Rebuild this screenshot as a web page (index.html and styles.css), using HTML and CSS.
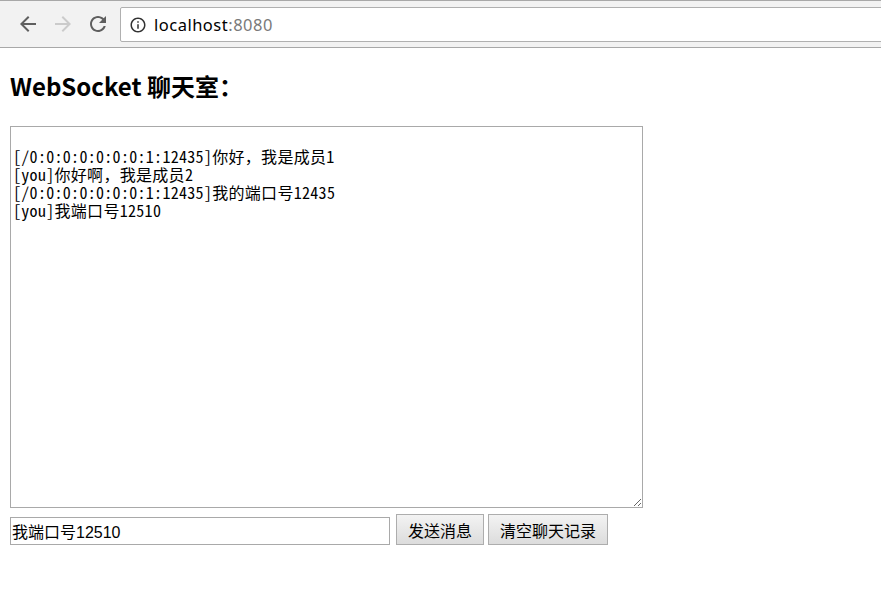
FILE: index.html
```html
<!DOCTYPE html>
<html lang="zh-CN">
<head>
<meta charset="utf-8">
<title>WebSocket 聊天室</title>
<link rel="stylesheet" href="styles.css">
</head>
<body>
<header class="chrome">
  <span class="nav-btn">
    <svg width="24" height="24" viewBox="0 0 24 24"><path fill="#5f5f5f" d="M20 11H7.83l5.59-5.59L12 4l-8 8 8 8 1.41-1.41L7.83 13H20v-2z"/></svg>
  </span>
  <span class="nav-btn">
    <svg width="24" height="24" viewBox="0 0 24 24"><path fill="#cbcbcb" d="M4 11h12.17l-5.59-5.59L12 4l8 8-8 8-1.41-1.41L16.17 13H4v-2z"/></svg>
  </span>
  <span class="nav-btn">
    <svg width="24" height="24" viewBox="0 0 24 24"><path fill="#5f5f5f" d="M17.65 6.35C16.2 4.9 14.21 4 12 4c-4.42 0-7.990 3.58-7.99 8s3.57 8 7.99 8c3.73 0 6.84-2.55 7.73-6h-2.08c-.82 2.33-3.04 4-5.65 4-3.31 0-6-2.690-6-6s2.69-6 6-6c1.66 0 3.14.69 4.22 1.78L13 11h7V4l-2.35 2.35z"/></svg>
  </span>
  <div class="omnibox">
    <svg class="info" width="18" height="18" viewBox="0 0 24 24"><path fill="#333" d="M11 7h2v2h-2zm0 4h2v6h-2zm1-9C6.48 2 2 6.48 2 12s4.48 10 10 10 10-4.48 10-10S17.52 2 12 2zm0 18c-4.41 0-8-3.59-8-8s3.59-8 8-8 8 3.59 8 8-3.59 8-8 8z"/></svg>
    <span class="url">localhost<span class="port">:8080</span></span>
  </div>
</header>
<main class="page">
  <h2 class="title">WebSocket 聊天室：</h2>
  <textarea class="log">

[/0:0:0:0:0:0:0:1:12435]你好，我是成员1
[you]你好啊，我是成员2
[/0:0:0:0:0:0:0:1:12435]我的端口号12435
[you]我端口号12510</textarea>
  <div class="controls">
    <input class="msg" type="text" value="我端口号12510">
    <button class="btn send" type="button">发送消息</button>
    <button class="btn clear" type="button">清空聊天记录</button>
  </div>
</main>
</body>
</html>
```

FILE: styles.css
```css
html, body {
  margin: 0;
  padding: 0;
  background: #fff;
}

body {
  font-family: "Liberation Sans", "Noto Sans CJK SC", sans-serif;
  color: #000;
}

.chrome {
  box-sizing: border-box;
  height: 48px;
  background: #f2f2f2;
  border-top: 1px solid #a8a8a8;
  border-bottom: 1px solid #a8a8a8;
  display: flex;
  align-items: center;
  overflow: hidden;
}

.nav-btn {
  width: 24px;
  height: 24px;
  display: flex;
  margin-left: 11px;
}

.nav-btn:first-child {
  margin-left: 16px;
}

.nav-btn svg {
  display: block;
}

.omnibox {
  box-sizing: border-box;
  flex: 1;
  height: 35px;
  margin-left: 10px;
  margin-right: -6px;
  margin-top: 1px;
  background: #fff;
  border: 1px solid #b0b0b0;
  border-radius: 2px;
  display: flex;
  align-items: center;
  padding-left: 8px;
}

.info {
  display: block;
  flex: none;
}

.url {
  margin-left: 7px;
  font-family: "Noto Sans", "Open Sans", sans-serif;
  font-size: 16.5px;
  letter-spacing: 0.5px;
  color: #000;
}

.port {
  color: #7a7a7a;
}

.page {
  padding: 0 10px;
}

.title {
  margin: 22px 0 24px;
  font-family: "Noto Sans CJK SC", sans-serif;
  font-size: 24px;
  line-height: 32px;
  font-weight: 700;
}

.log {
  display: block;
  box-sizing: border-box;
  width: 633px;
  height: 382px;
  margin: 0;
  padding: 2px;
  border: 1px solid #a9a9a9;
  font-family: "Noto Sans Mono CJK SC", "Liberation Mono", monospace;
  font-size: 16px;
  line-height: 18px;
  letter-spacing: 0.3px;
  color: #000;
  background: #fff;
}

.controls {
  display: flex;
  align-items: flex-end;
  margin-top: 6px;
}

.msg {
  box-sizing: border-box;
  width: 380px;
  height: 28px;
  margin: 0;
  padding: 0 1px;
  border: 1px solid #a9a9a9;
  font-family: "Liberation Sans", "Noto Sans CJK SC", sans-serif;
  font-size: 16px;
  color: #000;
  outline: none;
}

.btn {
  box-sizing: border-box;
  height: 31px;
  margin: 0 0 0 4px;
  padding: 0 11px;
  border: 1px solid #adadad;
  border-radius: 0;
  background: linear-gradient(#f3f3f3, #dcdcdc);
  font-family: "Noto Sans CJK SC", sans-serif;
  font-size: 16px;
  color: #000;
}

.send {
  margin-left: 6px;
}
```
